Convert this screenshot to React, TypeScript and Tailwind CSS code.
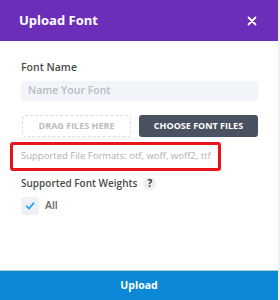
import React from "react";

export default function App() {
  return (
    <div className="w-[280px] h-[300px] bg-[#eef0f2] flex overflow-hidden" style={{ fontFamily: '"Open Sans", sans-serif' }}>
      <div className="w-[278px] h-[300px] bg-white flex flex-col">
        <div className="h-[41px] bg-[#6c2eb9] flex items-center justify-between pl-[19px] pr-[19px] shrink-0">
          <span className="text-white text-[13px] font-bold leading-none">Upload Font</span>
          <svg width="10" height="10" viewBox="0 0 10 10" className="mr-[2px]">
            <path d="M1.5 1.5 L8.5 8.5 M8.5 1.5 L1.5 8.5" stroke="white" strokeWidth="1.8" strokeLinecap="round" />
          </svg>
        </div>
        <div className="flex-1 flex flex-col pt-[18px]">
          <div className="pl-[21px] text-[10.5px] font-semibold text-[#4a4a4a] leading-[16px]">Font Name</div>
          <div className="ml-[21px] mt-[6px] w-[237px] h-[20px] bg-[#f1f5f9] rounded-[3px] flex items-center pl-[7px] text-[10.5px] text-[#b8bcc2] font-semibold whitespace-nowrap">
            Name Your Font
          </div>
          <div className="flex ml-[22px] mt-[14px] gap-[8px]">
            <div className="w-[109px] h-[22px] border border-dashed border-[#dcdcdc] rounded-[3px] flex items-center justify-center text-[9px] font-bold text-[#b9bdc2] whitespace-nowrap">
              DRAG FILES HERE
            </div>
            <div className="w-[119px] h-[22px] bg-[#4a5160] rounded-[3px] flex items-center justify-center text-[9px] font-bold text-white whitespace-nowrap">
              CHOOSE FONT FILES
            </div>
          </div>
          <div className="ml-[10px] mt-[5px] w-[211px] h-[29px] border-[3px] border-[#e8141b] rounded-[3px] flex items-center pl-[8px] text-[9.5px] text-[#adb1b7] whitespace-nowrap">
            Supported File Formats: otf, woff, woff2, ttf
          </div>
          <div className="flex items-center pl-[21px] mt-[4px] gap-[6px]">
            <span className="text-[10px] font-semibold text-[#4a4a4a] leading-[16px]">Supported Font Weights</span>
            <span className="w-[13px] h-[13px] rounded-full bg-[#eeeeee] flex items-center justify-center text-[10px] font-bold text-[#333]">?</span>
          </div>
          <div className="flex items-center pl-[21px] mt-[6px] gap-[6px]">
            <div className="w-[18px] h-[18px] rounded-[3px] bg-[#eef2f7] flex items-center justify-center">
              <svg width="10" height="10" viewBox="0 0 10 10">
                <path d="M1.5 5.2 L4 7.6 L8.6 2.2" stroke="#2ea3f2" strokeWidth="1.8" fill="none" strokeLinecap="round" strokeLinejoin="round" />
              </svg>
            </div>
            <span className="text-[10.5px] text-[#666] font-semibold">All</span>
          </div>
        </div>
        <div className="h-[30px] bg-[#0c89d6] border-t border-[#b8c4cc] flex items-center justify-center text-white text-[10.5px] font-bold shrink-0">
          Upload
        </div>
      </div>
    </div>
  );
}
